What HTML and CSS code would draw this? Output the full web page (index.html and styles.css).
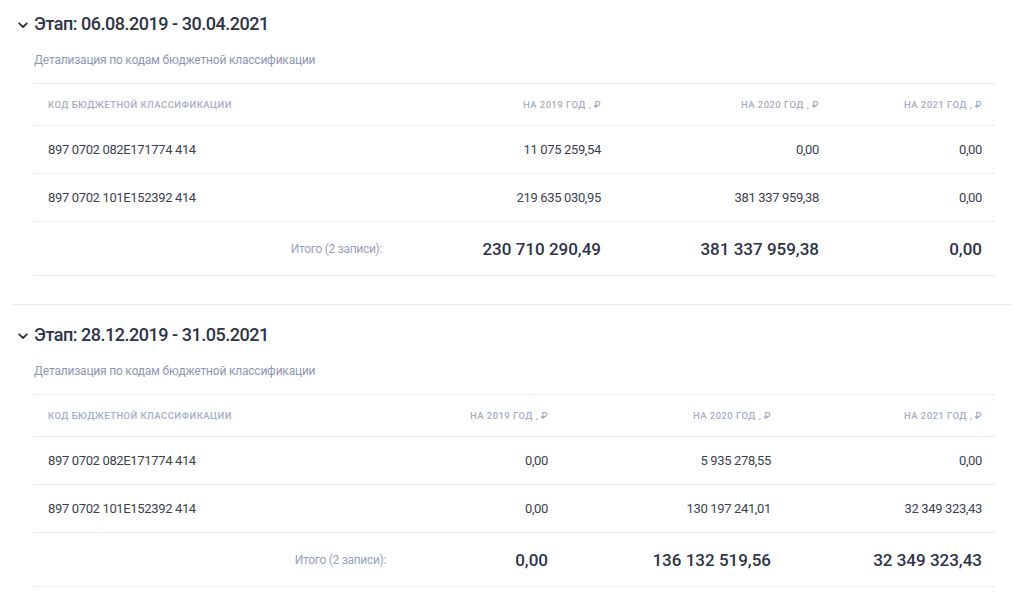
FILE: index.html
```html
<!DOCTYPE html>
<html lang="ru">
<head>
<meta charset="utf-8">
<title>Этапы</title>
<link rel="stylesheet" href="styles.css">
</head>
<body>
<section class="stage">
  <h2 class="stage-title">
    <svg class="chevron" width="10" height="7" viewBox="0 0 10 7"><path d="M1.2 1.3 L5 5 L8.8 1.3" fill="none" stroke="#2e3447" stroke-width="1.8" stroke-linecap="round" stroke-linejoin="round"/></svg>
    <span>Этап: 06.08.2019 - 30.04.2021</span>
  </h2>
  <div class="subtitle">Детализация по кодам бюджетной классификации</div>
  <div class="kbk kbk-a">
    <div class="row head">
      <div class="cell left">Код бюджетной классификации</div>
      <div class="cell">На 2019 год , ₽</div>
      <div class="cell">На 2020 год , ₽</div>
      <div class="cell">На 2021 год , ₽</div>
    </div>
    <div class="row data">
      <div class="cell left">897 0702 082E171774 414</div>
      <div class="cell">11 075 259,54</div>
      <div class="cell">0,00</div>
      <div class="cell">0,00</div>
    </div>
    <div class="row data">
      <div class="cell left">897 0702 101E152392 414</div>
      <div class="cell">219 635 030,95</div>
      <div class="cell">381 337 959,38</div>
      <div class="cell">0,00</div>
    </div>
    <div class="row total">
      <div class="cell label">Итого (2 записи):</div>
      <div class="cell">230 710 290,49</div>
      <div class="cell">381 337 959,38</div>
      <div class="cell">0,00</div>
    </div>
  </div>
</section>
<section class="stage">
  <h2 class="stage-title">
    <svg class="chevron" width="10" height="7" viewBox="0 0 10 7"><path d="M1.2 1.3 L5 5 L8.8 1.3" fill="none" stroke="#2e3447" stroke-width="1.8" stroke-linecap="round" stroke-linejoin="round"/></svg>
    <span>Этап: 28.12.2019 - 31.05.2021</span>
  </h2>
  <div class="subtitle">Детализация по кодам бюджетной классификации</div>
  <div class="kbk kbk-b">
    <div class="row head">
      <div class="cell left">Код бюджетной классификации</div>
      <div class="cell">На 2019 год , ₽</div>
      <div class="cell">На 2020 год , ₽</div>
      <div class="cell">На 2021 год , ₽</div>
    </div>
    <div class="row data">
      <div class="cell left">897 0702 082E171774 414</div>
      <div class="cell">0,00</div>
      <div class="cell">5 935 278,55</div>
      <div class="cell">0,00</div>
    </div>
    <div class="row data">
      <div class="cell left">897 0702 101E152392 414</div>
      <div class="cell">0,00</div>
      <div class="cell">130 197 241,01</div>
      <div class="cell">32 349 323,43</div>
    </div>
    <div class="row total">
      <div class="cell label">Итого (2 записи):</div>
      <div class="cell">0,00</div>
      <div class="cell">136 132 519,56</div>
      <div class="cell">32 349 323,43</div>
    </div>
  </div>
</section>
</body>
</html>
```
FILE: styles.css
```css
* { box-sizing: border-box; }
html, body { margin: 0; padding: 0; background: #fff; }
body {
  font-family: Roboto, "Noto Sans", "Liberation Sans", sans-serif;
  color: #3a3f50;
  width: 1024px;
}
.stage {
  margin: 0 12px;
  padding: 12px 16px 28px 6px;
  border-bottom: 1px solid #e9ecf3;
}
.stage + .stage { padding-top: 18px; }
.stage-title {
  display: flex;
  align-items: center;
  gap: 6px;
  margin: 0;
  font-size: 18px;
  font-weight: 500;
  line-height: 24px;
  color: #2e3447;
  letter-spacing: -0.48px;
}
.chevron { display: block; margin-top: 3px; }
.subtitle {
  margin: 13px 0 0 16px;
  font-size: 12px;
  line-height: 22px;
  color: #8e97b3;
  letter-spacing: -0.2px;
}
.kbk {
  margin: 12px 0 0 16px;
  border-top: 1px solid #eceef4;
}
.row {
  display: grid;
  border-bottom: 1px solid #eceef4;
  align-items: center;
}
.kbk-a .row { grid-template-columns: 362px 219px 218px 163px; }
.kbk-b .row { grid-template-columns: 366px 162px 223px 211px; }
.cell {
  padding: 0 14px;
  text-align: right;
  white-space: nowrap;
}
.cell.left { text-align: left; }
.head { height: 42px; }
.head .cell {
  font-size: 9.5px;
  font-weight: 500;
  text-transform: uppercase;
  letter-spacing: 0.45px;
  color: #a6aec3;
}
.data { height: 48px; }
.data .cell {
  font-size: 13px;
  letter-spacing: -0.35px;
  color: #3b3f4e;
}
.total { height: 54px; }
.total .cell {
  font-size: 17px;
  font-weight: 500;
  color: #2e3447;
}
.total .cell.label {
  font-size: 12px;
  font-weight: 400;
  color: #9aa2bc;
  letter-spacing: -0.3px;
}
```
